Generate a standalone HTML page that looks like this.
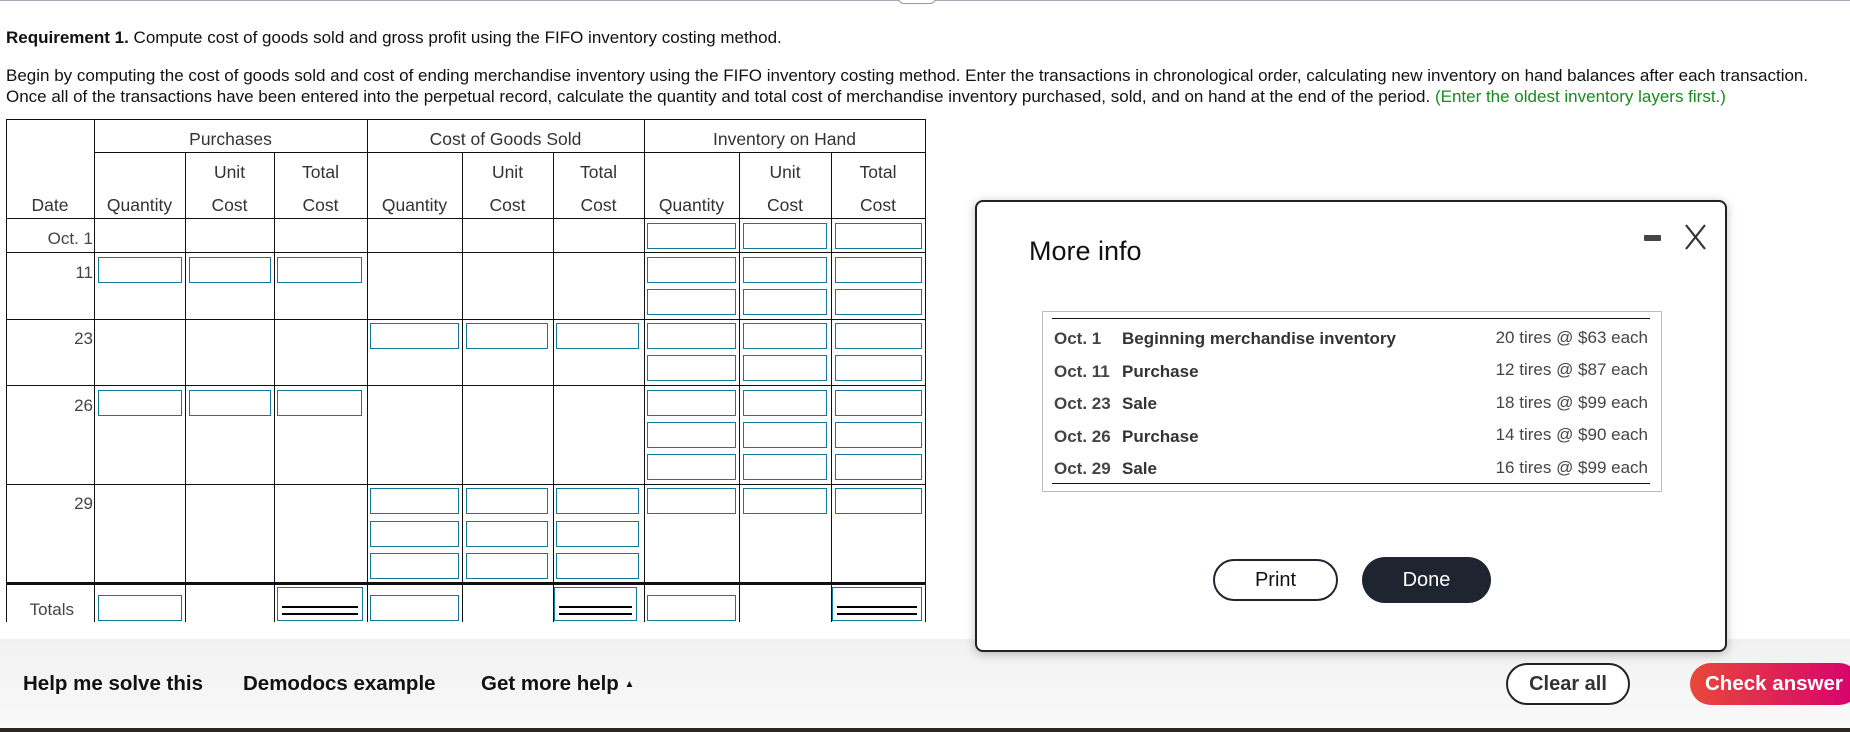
<!DOCTYPE html>
<html><head><meta charset="utf-8"><style>
*{margin:0;padding:0;box-sizing:border-box}
body{width:1850px;height:732px;position:relative;overflow:hidden;background:#fff;font-family:"Liberation Sans",Arial,sans-serif;color:#222}
.a{position:absolute}
.h{position:absolute;height:1px;background:#111}
.v{position:absolute;width:1px;background:#111}
.i{position:absolute;height:26px;border:1px solid #12799a;background:#fff}
.d{position:absolute;height:34px;border:1px solid #12799a;background:#fff}
.d:after{content:"";position:absolute;left:4px;right:4px;bottom:5px;height:5px;border-top:2px solid #000;border-bottom:2px solid #000}
.t{position:absolute;font-size:17.5px;color:#333;text-align:center;line-height:20px}
.r{position:absolute;font-size:17px;color:#444;text-align:right;line-height:20px}
.m{position:absolute;font-size:17px;color:#333;line-height:20px}
.f{position:absolute;font-size:20.5px;font-weight:bold;color:#111;top:672px}
</style></head><body>
<div class="h" style="left:0;top:0;width:1850px;background:#aab"></div>
<div class="a" style="left:898px;top:-6px;width:38px;height:10px;border:1px solid #999;border-radius:0 0 6px 6px;background:#fff"></div>

<div class="m" style="left:6px;top:28px;color:#111"><b>Requirement 1.</b> Compute cost of goods sold and gross profit using the FIFO inventory costing method.</div>
<div class="m" style="left:6px;top:66px;color:#111">Begin by computing the cost of goods sold and cost of ending merchandise inventory using the FIFO inventory costing method. Enter the transactions in chronological order, calculating new inventory on hand balances after each transaction.</div>
<div class="m" style="left:6px;top:87px;color:#111">Once all of the transactions have been entered into the perpetual record, calculate the quantity and total cost of merchandise inventory purchased, sold, and on hand at the end of the period. <span style="color:#188a1e">(Enter the oldest inventory layers first.)</span></div>

<div class="h" style="left:6px;top:119px;width:920px"></div>
<div class="h" style="left:94px;top:152px;width:832px"></div>
<div class="h" style="left:6px;top:218px;width:920px"></div>
<div class="h" style="left:6px;top:252px;width:920px"></div>
<div class="h" style="left:6px;top:319px;width:920px"></div>
<div class="h" style="left:6px;top:385px;width:920px"></div>
<div class="h" style="left:6px;top:484px;width:920px"></div>
<div class="h" style="left:6px;top:582px;width:920px;height:3px"></div>
<div class="v" style="left:6px;top:119px;height:503px"></div>
<div class="v" style="left:94px;top:119px;height:503px"></div>
<div class="v" style="left:185px;top:152px;height:470px"></div>
<div class="v" style="left:274px;top:152px;height:470px"></div>
<div class="v" style="left:367px;top:119px;height:503px"></div>
<div class="v" style="left:462px;top:152px;height:470px"></div>
<div class="v" style="left:553px;top:152px;height:470px"></div>
<div class="v" style="left:644px;top:119px;height:503px"></div>
<div class="v" style="left:739px;top:152px;height:470px"></div>
<div class="v" style="left:831px;top:152px;height:470px"></div>
<div class="v" style="left:925px;top:119px;height:503px"></div>

<div class="t" style="left:94px;width:273px;top:129px">Purchases</div>
<div class="t" style="left:367px;width:277px;top:129px">Cost of Goods Sold</div>
<div class="t" style="left:644px;width:281px;top:129px">Inventory on Hand</div>
<div class="t" style="left:185px;width:89px;top:162px">Unit</div>
<div class="t" style="left:274px;width:93px;top:162px">Total</div>
<div class="t" style="left:462px;width:91px;top:162px">Unit</div>
<div class="t" style="left:553px;width:91px;top:162px">Total</div>
<div class="t" style="left:739px;width:92px;top:162px">Unit</div>
<div class="t" style="left:831px;width:94px;top:162px">Total</div>
<div class="t" style="left:6px;width:88px;top:195px">Date</div>
<div class="t" style="left:94px;width:91px;top:195px">Quantity</div>
<div class="t" style="left:185px;width:89px;top:195px">Cost</div>
<div class="t" style="left:274px;width:93px;top:195px">Cost</div>
<div class="t" style="left:367px;width:95px;top:195px">Quantity</div>
<div class="t" style="left:462px;width:91px;top:195px">Cost</div>
<div class="t" style="left:553px;width:91px;top:195px">Cost</div>
<div class="t" style="left:644px;width:95px;top:195px">Quantity</div>
<div class="t" style="left:739px;width:92px;top:195px">Cost</div>
<div class="t" style="left:831px;width:94px;top:195px">Cost</div>

<div class="r" style="left:6px;width:87px;top:229px">Oct. 1</div>
<div class="r" style="left:6px;width:87px;top:263px">11</div>
<div class="r" style="left:6px;width:87px;top:329px">23</div>
<div class="r" style="left:6px;width:87px;top:396px">26</div>
<div class="r" style="left:6px;width:87px;top:494px">29</div>
<div class="r" style="left:6px;width:68px;top:600px">Totals</div>

<div class="i" style="left:647px;top:223px;width:89px"></div><div class="i" style="left:743px;top:223px;width:84px"></div><div class="i" style="left:835px;top:223px;width:87px"></div>

<div class="i" style="left:98px;top:257px;width:84px"></div><div class="i" style="left:189px;top:257px;width:82px"></div><div class="i" style="left:277px;top:257px;width:85px"></div>
<div class="i" style="left:647px;top:257px;width:89px"></div><div class="i" style="left:743px;top:257px;width:84px"></div><div class="i" style="left:835px;top:257px;width:87px"></div>
<div class="i" style="left:647px;top:289px;width:89px"></div><div class="i" style="left:743px;top:289px;width:84px"></div><div class="i" style="left:835px;top:289px;width:87px"></div>

<div class="i" style="left:370px;top:323px;width:89px"></div><div class="i" style="left:466px;top:323px;width:82px"></div><div class="i" style="left:556px;top:323px;width:83px"></div>
<div class="i" style="left:647px;top:323px;width:89px"></div><div class="i" style="left:743px;top:323px;width:84px"></div><div class="i" style="left:835px;top:323px;width:87px"></div>
<div class="i" style="left:647px;top:355px;width:89px"></div><div class="i" style="left:743px;top:355px;width:84px"></div><div class="i" style="left:835px;top:355px;width:87px"></div>

<div class="i" style="left:98px;top:390px;width:84px"></div><div class="i" style="left:189px;top:390px;width:82px"></div><div class="i" style="left:277px;top:390px;width:85px"></div>
<div class="i" style="left:647px;top:390px;width:89px"></div><div class="i" style="left:743px;top:390px;width:84px"></div><div class="i" style="left:835px;top:390px;width:87px"></div>
<div class="i" style="left:647px;top:422px;width:89px"></div><div class="i" style="left:743px;top:422px;width:84px"></div><div class="i" style="left:835px;top:422px;width:87px"></div>
<div class="i" style="left:647px;top:454px;width:89px"></div><div class="i" style="left:743px;top:454px;width:84px"></div><div class="i" style="left:835px;top:454px;width:87px"></div>

<div class="i" style="left:370px;top:488px;width:89px"></div><div class="i" style="left:466px;top:488px;width:82px"></div><div class="i" style="left:556px;top:488px;width:83px"></div>
<div class="i" style="left:647px;top:488px;width:89px"></div><div class="i" style="left:743px;top:488px;width:84px"></div><div class="i" style="left:835px;top:488px;width:87px"></div>
<div class="i" style="left:370px;top:521px;width:89px"></div><div class="i" style="left:466px;top:521px;width:82px"></div><div class="i" style="left:556px;top:521px;width:83px"></div>
<div class="i" style="left:370px;top:553px;width:89px"></div><div class="i" style="left:466px;top:553px;width:82px"></div><div class="i" style="left:556px;top:553px;width:83px"></div>

<div class="i" style="left:98px;top:595px;width:84px"></div>
<div class="d" style="left:277px;top:587px;width:86px"></div>
<div class="i" style="left:370px;top:595px;width:89px"></div>
<div class="d" style="left:554px;top:587px;width:83px"></div>
<div class="i" style="left:647px;top:595px;width:89px"></div>
<div class="d" style="left:832px;top:587px;width:90px"></div>

<div class="a" style="left:0;top:639px;width:1850px;height:89px;background:linear-gradient(#f1f1f1,#f9f9f9)"></div>
<div class="a" style="left:0;top:728px;width:1850px;height:4px;background:#2a2622"></div>
<div class="f" style="left:23px">Help me solve this</div>
<div class="f" style="left:243px">Demodocs example</div>
<div class="f" style="left:481px">Get more help <span style="font-size:10px;vertical-align:3px">▲</span></div>
<div class="a" style="left:1506px;top:663px;width:124px;height:42px;border:2px solid #222;border-radius:21px;background:#fff;font-size:20px;font-weight:bold;color:#333;text-align:center;line-height:38px">Clear all</div>
<div class="a" style="left:1690px;top:663px;width:170px;height:42px;border-radius:21px;background:linear-gradient(90deg,#e8483a,#d6006f);font-size:20.5px;font-weight:bold;color:#fff;line-height:42px;padding-left:15px;white-space:nowrap">Check answer</div>

<div class="a" style="left:975px;top:200px;width:752px;height:452px;border:2px solid #222;border-radius:8px;background:#fff;box-shadow:0 2px 10px rgba(0,0,0,.25)"></div>
<div class="a" style="left:1029px;top:236px;font-size:27px;color:#111">More info</div>
<div class="a" style="left:1644px;top:235px;width:17px;height:6px;background:#444;border-radius:1px"></div>
<svg class="a" style="left:1684px;top:223px" width="23" height="28" viewBox="0 0 23 28"><path d="M2 2L21 26M21 2L2 26" stroke="#333" stroke-width="2.2" fill="none"/></svg>
<div class="a" style="left:1042px;top:311px;width:620px;height:181px;border:1px solid #bbb"></div>
<div class="h" style="left:1052px;top:318px;width:598px"></div>
<div class="h" style="left:1052px;top:483px;width:598px"></div>
<div class="m" style="left:1054px;top:329px;font-weight:bold;color:#444">Oct. 1</div><div class="m" style="left:1122px;top:329px;font-weight:bold;color:#333">Beginning merchandise inventory</div><div class="r" style="left:1400px;width:248px;top:328px">20 tires @ $63 each</div>
<div class="m" style="left:1054px;top:362px;font-weight:bold;color:#444">Oct. 11</div><div class="m" style="left:1122px;top:362px;font-weight:bold;color:#333">Purchase</div><div class="r" style="left:1400px;width:248px;top:360px">12 tires @ $87 each</div>
<div class="m" style="left:1054px;top:394px;font-weight:bold;color:#444">Oct. 23</div><div class="m" style="left:1122px;top:394px;font-weight:bold;color:#333">Sale</div><div class="r" style="left:1400px;width:248px;top:393px">18 tires @ $99 each</div>
<div class="m" style="left:1054px;top:427px;font-weight:bold;color:#444">Oct. 26</div><div class="m" style="left:1122px;top:427px;font-weight:bold;color:#333">Purchase</div><div class="r" style="left:1400px;width:248px;top:425px">14 tires @ $90 each</div>
<div class="m" style="left:1054px;top:459px;font-weight:bold;color:#444">Oct. 29</div><div class="m" style="left:1122px;top:459px;font-weight:bold;color:#333">Sale</div><div class="r" style="left:1400px;width:248px;top:458px">16 tires @ $99 each</div>
<div class="a" style="left:1213px;top:559px;width:125px;height:42px;border:2px solid #1e2430;border-radius:21px;font-size:20px;color:#111;text-align:center;line-height:38px">Print</div>
<div class="a" style="left:1362px;top:557px;width:129px;height:46px;background:#1e2430;border-radius:23px;font-size:20px;color:#fff;text-align:center;line-height:46px">Done</div>
</body></html>
